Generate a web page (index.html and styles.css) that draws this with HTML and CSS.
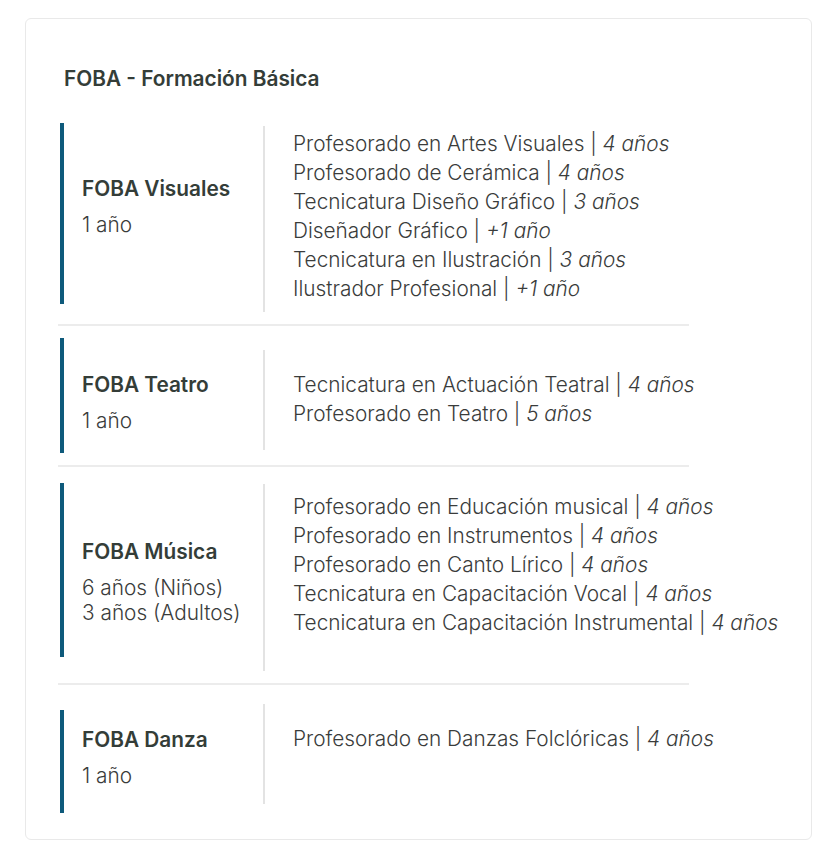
FILE: index.html
```html
<!DOCTYPE html>
<html lang="es">
<head>
    <meta charset="UTF-8">
    <meta name="viewport" content="width=device-width, initial-scale=1.0">
    <title>FOBA - Formación Básica</title>
    <link rel="stylesheet" href="styles.css">
</head>
<body>

    <div class="card">
        <h2 class="card-title">FOBA - Formación Básica</h2>

        <!-- Visuales -->
        <div class="track track-visuales">
            <div class="track-name">
                <h3>FOBA Visuales</h3>
                <p>1 año</p>
            </div>
            <ul class="track-careers">
                <li>Profesorado en Artes Visuales | <em>4 años</em></li>
                <li>Profesorado de Cerámica | <em>4 años</em></li>
                <li>Tecnicatura Diseño Gráfico | <em>3 años</em></li>
                <li>Diseñador Gráfico | <em>+1 año</em></li>
                <li>Tecnicatura en Ilustración | <em>3 años</em></li>
                <li>Ilustrador Profesional | <em>+1 año</em></li>
            </ul>
        </div>
        <hr class="sep">

        <!-- Teatro -->
        <div class="track track-teatro">
            <div class="track-name">
                <h3>FOBA Teatro</h3>
                <p>1 año</p>
            </div>
            <ul class="track-careers">
                <li>Tecnicatura en Actuación Teatral | <em>4 años</em></li>
                <li>Profesorado en Teatro | <em>5 años</em></li>
            </ul>
        </div>
        <hr class="sep">

        <!-- Música -->
        <div class="track track-musica">
            <div class="track-name">
                <h3>FOBA Música</h3>
                <p>6 años (Niños)<br>3 años (Adultos)</p>
            </div>
            <ul class="track-careers">
                <li>Profesorado en Educación musical | <em>4 años</em></li>
                <li>Profesorado en Instrumentos | <em>4 años</em></li>
                <li>Profesorado en Canto Lírico | <em>4 años</em></li>
                <li>Tecnicatura en Capacitación Vocal | <em>4 años</em></li>
                <li>Tecnicatura en Capacitación Instrumental | <em>4 años</em></li>
            </ul>
        </div>
        <hr class="sep">

        <!-- Danza -->
        <div class="track track-danza">
            <div class="track-name">
                <h3>FOBA Danza</h3>
                <p>1 año</p>
            </div>
            <ul class="track-careers">
                <li>Profesorado en Danzas Folclóricas | <em>4 años</em></li>
            </ul>
        </div>
    </div>

</body>
</html>
```

FILE: styles.css
```css
* {
    box-sizing: border-box;
}

body {
    margin: 0;
    padding: 18px 22px 20px 25px;
    font-family: Inter, "Noto Sans", sans-serif;
    font-size: 20.8px;
    font-weight: 300;
    background-color: #fff;
    color: #3a3c3b;
}

.card {
    border: 1px solid #e9e9e9;
    border-radius: 6px;
    padding: 46px 20px 26px 34px;
}

.card-title {
    margin: 0 0 31px 4px;
    font-size: 20.8px;
    font-weight: 600;
    line-height: 27px;
    color: #343d38;
}

/* one row per FOBA track */
.track {
    display: flex;
    align-items: flex-start;
}

.track-name {
    width: 203px;
    flex-shrink: 0;
    border-left: 4px solid #0e5a7b;
    padding-left: 18px;
}
.track-name h3 {
    margin: 0 0 10px;
    font-size: 20.8px;
    font-weight: 600;
    line-height: 27px;
    color: #343d38;
}
.track-name p {
    margin: 0;
    line-height: 25px;
}

.track-careers {
    list-style: none;
    margin: 0;
    padding: 0 0 0 28px;
    border-left: 2px solid #e3e3e3;
    line-height: 29px;
    white-space: nowrap;
}
.track-careers em {
    font-style: italic;
}

.sep {
    width: 631px;
    margin: 12px 0 12px -2px;
    border: none;
    border-top: 2px solid #ececec;
}

/* the rows don't share the same spacing, so each gets its own */
.track-visuales .track-name { height: 181px; padding-top: 52px; }
.track-visuales .track-careers { margin-top: 3px; height: 186px; padding-top: 3px; }

.track-teatro .track-name { height: 115px; padding-top: 33px; }
.track-teatro .track-careers { margin-top: 12px; height: 100px; padding-top: 20px; }

.track-musica { margin-top: 16px; }
.track-musica .track-name { height: 174px; padding-top: 55px; }
.track-musica .track-careers { margin-top: 1px; height: 187px; padding-top: 8px; }

.track-danza { margin-top: 19px; }
.track-danza .track-name { margin-top: 6px; height: 103px; padding-top: 16px; }
.track-danza .track-careers { height: 100px; padding-top: 20px; }
```
